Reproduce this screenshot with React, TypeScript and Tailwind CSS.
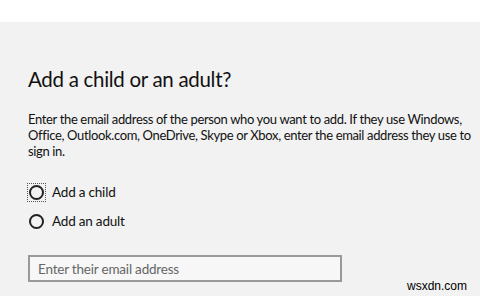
import { useState } from "react";

const font = { fontFamily: 'Lato, "Noto Sans", sans-serif' };

function Radio({ label, focused, checked, onClick }: { label: string; focused?: boolean; checked: boolean; onClick: () => void }) {
  return (
    <button type="button" onClick={onClick} className="flex h-[16px] items-center gap-[7px] text-left">
      <span className={focused ? "flex h-[17px] w-[17px] items-center justify-center outline-1 outline-dotted outline-[#555]" : "flex h-[17px] w-[17px] items-center justify-center"}>
        <span className="flex h-[15px] w-[15px] items-center justify-center rounded-full border-2 border-[#222]">
          {checked && <span className="h-[7px] w-[7px] rounded-full bg-[#222]" />}
        </span>
      </span>
      <span className="text-[13.5px] leading-[16px] tracking-[-0.2px] text-[#111]">{label}</span>
    </button>
  );
}

export default function App() {
  const [kind, setKind] = useState<string | null>(null);

  return (
    <div className="relative h-[296px] w-[480px] overflow-hidden bg-white" style={font}>
      <div className="h-[22px] bg-white" />
      <div className="h-[274px] bg-[#f2f2f2] pl-[28px] pt-[44px]">
        <h1 className="text-[20.5px] leading-[26px] tracking-[-0.3px] text-[#111]">Add a child or an adult?</h1>
        <p className="mt-[19px] w-[452px] text-[13px] leading-[16px] tracking-[-0.35px] text-[#111]">
          Enter the email address of the person who you want to add. If they use Windows, Office, Outlook.com, OneDrive, Skype or Xbox, enter the email address they use to sign in.
        </p>
        <div className="mt-[25px] flex flex-col gap-[13px]">
          <Radio label="Add a child" focused checked={kind === "child"} onClick={() => setKind("child")} />
          <Radio label="Add an adult" checked={kind === "adult"} onClick={() => setKind("adult")} />
        </div>
        <input
          type="email"
          placeholder="Enter their email address"
          className="mt-[26px] h-[27px] w-[314px] border-2 border-[#999] bg-[#f7f7f7] px-[8px] text-[13.5px] tracking-[-0.2px] text-[#111] outline-none placeholder:text-[#666]"
        />
      </div>
      <span
        className="absolute left-[407px] top-[279px] text-[12px] leading-[14px] text-black"
        style={{ fontFamily: '"Liberation Sans", Arial, sans-serif' }}
      >
        wsxdn.com
      </span>
    </div>
  );
}
